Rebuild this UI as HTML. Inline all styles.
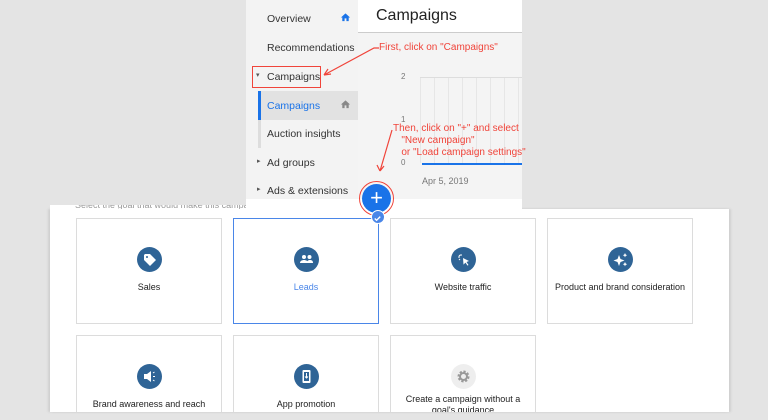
<!DOCTYPE html>
<html style="width:768px;height:420px;overflow:hidden"><head><style>
*{margin:0;padding:0;box-sizing:border-box}
body{width:768px;height:420px;background:#e4e4e4;position:relative;overflow:hidden;font-family:"Liberation Sans",sans-serif}
.a{position:absolute}
.side{left:246px;top:0;width:112px;height:209px;background:#f3f3f3}
.si{position:absolute;left:21px;font-size:10.5px;color:#333}
.main{left:358px;top:0;width:164px;height:209px;background:#f4f4f4}
.card{position:absolute;width:146px;height:106px;background:#fff;border:1px solid #dcdcdc}
.card .ic{position:absolute;left:60px;top:28px;width:25px;height:25px;border-radius:50%;background:#2f6496}
.card .t{position:absolute;left:0;right:0;top:63px;text-align:center;font-size:9px;color:#222}
.red{color:#f0443a;font-size:10px;position:absolute}
</style></head><body>
<div class="a side">
 <div class="si" style="top:13px">Overview</div>
 <svg class="a" style="left:94px;top:12px" width="11" height="11" viewBox="0 0 24 24"><path d="M10 20v-6h4v6h5v-8h3L12 3 2 12h3v8z" fill="#1a73e8"/></svg>
 <div class="si" style="top:42px">Recommendations</div>
 <div class="a" style="left:6px;top:66px;width:69px;height:22px;border:1.5px solid #f0443a"></div>
 <div class="si" style="top:71px;left:10px;font-size:7px;color:#555">▾</div>
 <div class="si" style="top:71px">Campaigns</div>
 <div class="a" style="left:12px;top:91px;width:100px;height:29px;background:#e2e2e2"></div>
 <div class="a" style="left:12px;top:91px;width:3px;height:29px;background:#1a73e8"></div>
 <div class="a" style="left:12px;top:120px;width:3px;height:28px;background:#ddd"></div>
 <div class="si" style="top:100px;color:#1a73e8">Campaigns</div>
 <svg class="a" style="left:94px;top:99px" width="11" height="11" viewBox="0 0 24 24"><path d="M10 20v-6h4v6h5v-8h3L12 3 2 12h3v8z" fill="#888"/></svg>
 <div class="si" style="top:128px">Auction insights</div>
 <div class="si" style="top:157px;left:11px;font-size:7px;color:#555">▸</div>
 <div class="si" style="top:157px">Ad groups</div>
 <div class="si" style="top:185px;left:11px;font-size:7px;color:#555">▸</div>
 <div class="si" style="top:185px">Ads &amp; extensions</div>
</div>
<div class="a main">
 <div class="a" style="left:0;top:0;width:164px;height:33px;background:#fff;border-bottom:1px solid #ccc"></div>
 <div class="a" style="left:18px;top:7px;font-size:16px;color:#222">Campaigns</div>
 <div class="a" style="left:43px;top:73px;font-size:8px;color:#777;line-height:1">2</div>
 <div class="a" style="left:43px;top:116px;font-size:8px;color:#777;line-height:1">1</div>
 <div class="a" style="left:43px;top:159px;font-size:8px;color:#777;line-height:1">0</div>
 <div class="a" style="left:62px;top:77px;width:102px;height:86px;background:repeating-linear-gradient(90deg,#e6e6e6 0 1px,transparent 1px 14px)"></div>
 <div class="a" style="left:62px;top:77px;width:102px;height:1px;background:#ddd"></div>
 <div class="a" style="left:64px;top:163px;width:100px;height:2px;background:#1a73e8"></div>
 <div class="a" style="left:64px;top:176px;font-size:9px;color:#777">Apr 5, 2019</div>
 <div class="a" style="left:0;top:199px;width:164px;height:10px;background:#fff"></div>
</div>
<div class="red" style="left:379px;top:42px">First, click on "Campaigns"</div>
<svg class="a" style="left:0;top:0" width="768" height="210"><path d="M379 48 L374 48 L324 75 M324 75 l7 -1 M324 75 l4 -6" stroke="#f0443a" stroke-width="1.2" fill="none"/><path d="M392 130 L380 171 M380 171 l-3 -6 M380 171 l4 -5" stroke="#f0443a" stroke-width="1.2" fill="none"/></svg>
<div class="red" style="left:393px;top:123px;line-height:12px">Then, click on "+" and select<br>&nbsp;&nbsp;&nbsp;"New campaign"<br>&nbsp;&nbsp;&nbsp;or "Load campaign settings"</div>
<div class="a" style="left:50px;top:209px;width:679px;height:203px;background:#fff;box-shadow:-2px 0 2px #d0d0d0,2px 0 2px #d0d0d0"></div>
<div class="a" style="left:50px;top:205px;width:196px;height:4px;background:#fff;overflow:hidden"><div class="a" style="left:25px;top:-5px;font-size:9px;color:#999;white-space:nowrap">Select the goal that would make this campaign successful to you</div></div>
<div class="a" style="left:246px;top:199px;width:276px;height:10px;background:#fff"></div>
<div class="a" style="left:359px;top:181px;width:35px;height:35px;border-radius:50%;border:1.5px solid #f0443a"></div>
<div class="a" style="left:362px;top:184px;width:29px;height:29px;border-radius:50%;background:#1a73e8;color:#fff;text-align:center;font-size:22px;line-height:28px">+</div>

<div class="card" style="left:76px;top:218px"><div class="ic"><svg width="25" height="25" viewBox="0 0 25 25"><path d="M7 8v5l6 6 6-6-6-6H8z" fill="#fff"/><circle cx="10" cy="10" r="1" fill="#2f6496"/></svg></div><div class="t">Sales</div></div>
<div class="card" style="left:233px;top:218px;border:1.5px solid #4a86e8"><div class="ic"><svg width="25" height="25" viewBox="0 0 25 25"><circle cx="10" cy="10" r="2" fill="#fff"/><circle cx="15.5" cy="10" r="2" fill="#fff"/><path d="M6 16c0-2 2-3 4-3s4 1 4 3zM13 16c0-2 1-3 3-3s3 1 3 3z" fill="#fff"/></svg></div><div class="t" style="color:#4a86e8">Leads</div></div>
<div class="a" style="left:371px;top:210px;width:14px;height:14px;border-radius:50%;background:#4a86e8;border:1.5px solid #fff"><svg width="11" height="11" viewBox="0 0 12 12"><path d="M3 6l2 2 4-4" stroke="#fff" stroke-width="1.5" fill="none"/></svg></div>
<div class="card" style="left:390px;top:218px"><div class="ic"><svg width="25" height="25" viewBox="0 0 25 25"><path d="M12 11l6 3-2.5 1 2 3-1 .6-2-3-2 2z" fill="#fff"/><path d="M10 7v2M7 10h2M8 8l1 1M8 13l1-1" stroke="#fff" stroke-width="1"/></svg></div><div class="t">Website traffic</div></div>
<div class="card" style="left:547px;top:218px"><div class="ic"><svg width="25" height="25" viewBox="0 0 25 25"><path d="M11 8l1.5 4 4 1.5-4 1.5-1.5 4-1.5-4-4-1.5 4-1.5z" fill="#fff"/><path d="M17 6l.7 1.5 1.5.7-1.5.7-.7 1.5-.7-1.5-1.5-.7 1.5-.7zM17 15l.7 1.5 1.5.7-1.5.7-.7 1.5-.7-1.5-1.5-.7 1.5-.7z" fill="#fff"/></svg></div><div class="t">Product and brand consideration</div></div>
<div class="card" style="left:76px;top:335px;height:77px;border-bottom:none"><div class="ic"><svg width="25" height="25" viewBox="0 0 25 25"><path d="M7 10h3l4-3v11l-4-3H7z" fill="#fff"/><path d="M16 12.5h2M16 9l1.5-1M16 16l1.5 1" stroke="#fff"/></svg></div><div class="t">Brand awareness and reach</div></div>
<div class="card" style="left:233px;top:335px;height:77px;border-bottom:none"><div class="ic"><svg width="25" height="25" viewBox="0 0 25 25"><rect x="8.5" y="6" width="8" height="13" rx="1" fill="#fff"/><rect x="10" y="8" width="5" height="9" fill="#2f6496"/><path d="M12.5 9v5M11 12.5l1.5 1.5 1.5-1.5" stroke="#fff"/></svg></div><div class="t">App promotion</div></div>
<div class="card" style="left:390px;top:335px;height:77px;border-bottom:none;overflow:hidden"><div class="ic" style="background:#eee"><svg width="25" height="25" viewBox="0 0 25 25"><circle cx="12.5" cy="12.5" r="4.5" fill="none" stroke="#999" stroke-width="3" stroke-dasharray="2 1.5"/><circle cx="12.5" cy="12.5" r="3.5" fill="none" stroke="#999" stroke-width="2"/></svg></div><div class="t" style="top:58px;line-height:11px">Create a campaign without a<br>goal's guidance</div></div>
</body></html>
